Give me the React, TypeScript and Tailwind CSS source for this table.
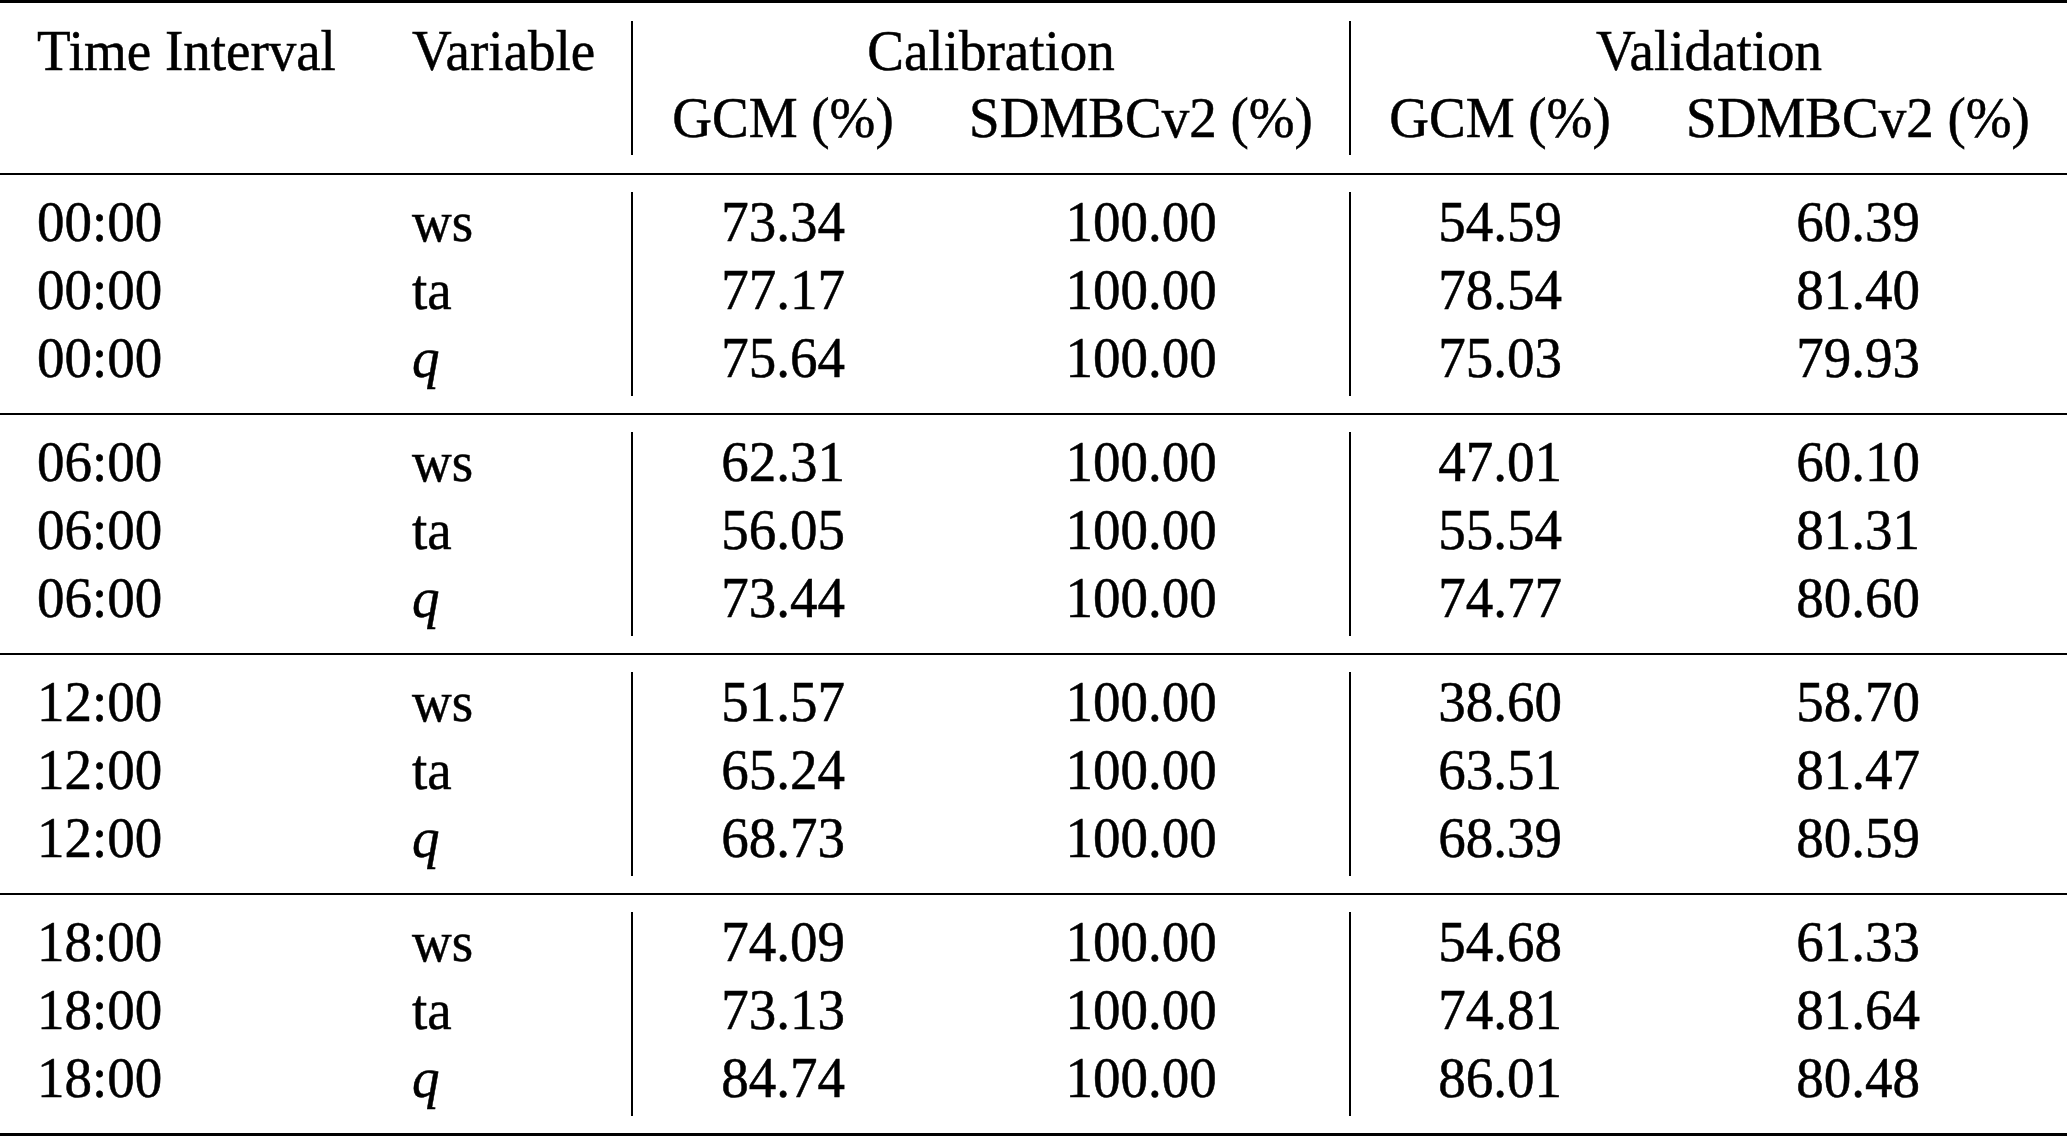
import React from 'react';

type Row = { time: string; v: string; cg: string; cs: string; vg: string; vs: string };

const groups: Row[][] = [
  [
    { time: '00:00', v: 'ws', cg: '73.34', cs: '100.00', vg: '54.59', vs: '60.39' },
    { time: '00:00', v: 'ta', cg: '77.17', cs: '100.00', vg: '78.54', vs: '81.40' },
    { time: '00:00', v: 'q', cg: '75.64', cs: '100.00', vg: '75.03', vs: '79.93' },
  ],
  [
    { time: '06:00', v: 'ws', cg: '62.31', cs: '100.00', vg: '47.01', vs: '60.10' },
    { time: '06:00', v: 'ta', cg: '56.05', cs: '100.00', vg: '55.54', vs: '81.31' },
    { time: '06:00', v: 'q', cg: '73.44', cs: '100.00', vg: '74.77', vs: '80.60' },
  ],
  [
    { time: '12:00', v: 'ws', cg: '51.57', cs: '100.00', vg: '38.60', vs: '58.70' },
    { time: '12:00', v: 'ta', cg: '65.24', cs: '100.00', vg: '63.51', vs: '81.47' },
    { time: '12:00', v: 'q', cg: '68.73', cs: '100.00', vg: '68.39', vs: '80.59' },
  ],
  [
    { time: '18:00', v: 'ws', cg: '74.09', cs: '100.00', vg: '54.68', vs: '61.33' },
    { time: '18:00', v: 'ta', cg: '73.13', cs: '100.00', vg: '74.81', vs: '81.64' },
    { time: '18:00', v: 'q', cg: '84.74', cs: '100.00', vg: '86.01', vs: '80.48' },
  ],
];

// text in the pdf is a bit taller than wide, stretch it a little
const T = ({ children, italic }: { children: React.ReactNode; italic?: boolean }) => (
  <span className={`inline-block -translate-y-[4px] scale-y-[1.05] [-webkit-text-stroke:0.5px_black] ${italic ? 'italic' : ''}`}>{children}</span>
);

const cols = 'grid grid-cols-[412px_219px_302px_416px_300px_418px]';

const App = () => {
  return (
    <div className="w-[2067px] min-h-[1137px] bg-white">
      <div className="w-[2067px] text-black font-['Liberation_Serif','Times_New_Roman',serif] text-[55px] border-t-[3px] border-b-[3px] border-black">
        {/* header */}
        <div className={`${cols} py-[18px] leading-[67px]`}>
          <div className="pl-[37px]"><T>Time Interval</T></div>
          <div><T>Variable</T></div>
          <div className="col-span-2 border-l-2 border-black text-center"><T>Calibration</T></div>
          <div className="col-span-2 border-l-2 border-black text-center"><T>Validation</T></div>
          <div></div>
          <div></div>
          <div className="border-l-2 border-black text-center"><T>GCM (%)</T></div>
          <div className="text-center"><T>SDMBCv2 (%)</T></div>
          <div className="border-l-2 border-black text-center"><T>GCM (%)</T></div>
          <div className="text-center"><T>SDMBCv2 (%)</T></div>
        </div>

        {groups.map((g, gi) => (
          <div key={gi} className={`${cols} border-t-2 border-black py-[17px] leading-[68px]`}>
            {g.map((r, ri) => (
              <React.Fragment key={ri}>
                <div className="pl-[37px]"><T>{r.time}</T></div>
                <div><T italic={r.v === 'q'}>{r.v}</T></div>
                <div className="border-l-2 border-black text-center"><T>{r.cg}</T></div>
                <div className="text-center"><T>{r.cs}</T></div>
                <div className="border-l-2 border-black text-center"><T>{r.vg}</T></div>
                <div className="text-center"><T>{r.vs}</T></div>
              </React.Fragment>
            ))}
          </div>
        ))}
      </div>
    </div>
  );
};

export default App;
